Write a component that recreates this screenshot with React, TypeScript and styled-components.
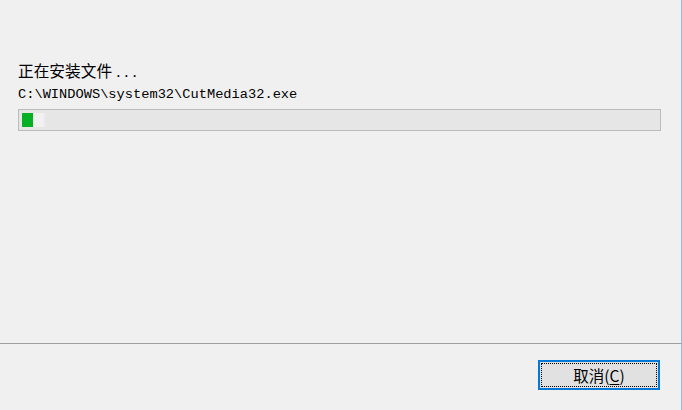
import React from "react";
import styled, { createGlobalStyle } from "styled-components";

const Global = createGlobalStyle`
  html, body { margin: 0; padding: 0; background: #f0f0f0; }
  #root { width: 682px; height: 410px; }
`;

const Window = styled.div`
  width: 682px;
  height: 410px;
  box-sizing: border-box;
  background: #f0f0f0;
  border-right: 1px solid #8cbdea;
  display: flex;
  flex-direction: column;
  font-family: "Noto Sans CJK SC", "Noto Sans", sans-serif;
  color: #000;
`;

const Body = styled.div`
  flex: 1;
  padding: 61px 20px 0 18px;
  display: flex;
  flex-direction: column;
`;

const Status = styled.div`
  font-size: 15.7px;
  line-height: 20px;
  height: 20px;
  white-space: nowrap;
`;

const Dots = styled.span`
  font-family: "Liberation Mono", "DejaVu Sans Mono", monospace;
  font-size: 13.7px;
  margin-left: 2px;
`;

const Path = styled.div`
  margin-top: 6px;
  font-family: "Liberation Mono", "DejaVu Sans Mono", monospace;
  font-size: 13.7px;
  line-height: 16px;
  height: 16px;
  white-space: nowrap;
`;

const Track = styled.div`
  margin-top: 6px;
  height: 22px;
  box-sizing: border-box;
  border: 1px solid #bcbcbc;
  background: #e6e6e6;
  padding: 3px;
  display: flex;
  align-items: stretch;
`;

const Fill = styled.div<{ $w: number }>`
  width: ${(p) => p.$w}px;
  background: #06b025;
`;

const Glow = styled.div`
  width: 13px;
  background: linear-gradient(to right, #e6e6e6 0, #f1f1f1 20%, #f1f1f1 75%, #e6e6e6 100%);
`;

const Footer = styled.div`
  height: 67px;
  box-sizing: border-box;
  border-top: 1px solid #a0a0a0;
  display: flex;
  justify-content: flex-end;
  align-items: flex-start;
  padding: 16px 21px 0 0;
`;

const Button = styled.button`
  width: 122px;
  height: 30px;
  box-sizing: border-box;
  border: 2px solid #0078d7;
  background: #e1e1e1;
  padding: 1px;
  margin: 0;
  font-family: "Noto Sans CJK SC", "Noto Sans", sans-serif;
  font-size: 15.5px;
  color: #000;
  display: flex;
`;

const Focus = styled.span`
  flex: 1;
  border: 1px dotted #000;
  display: flex;
  align-items: center;
  justify-content: center;
  line-height: 20px;
`;

const U = styled.span`
  text-decoration: underline;
  text-underline-offset: 2px;
`;

export default function App() {
  return (
    <>
      <Global />
      <Window>
        <Body>
          <Status>
            正在安装文件<Dots>...</Dots>
          </Status>
          <Path>C:\WINDOWS\system32\CutMedia32.exe</Path>
          <Track>
            <Fill $w={11} />
            <Glow />
          </Track>
        </Body>
        <Footer>
          <Button>
            <Focus>
              取消(<U>C</U>)
            </Focus>
          </Button>
        </Footer>
      </Window>
    </>
  );
}
